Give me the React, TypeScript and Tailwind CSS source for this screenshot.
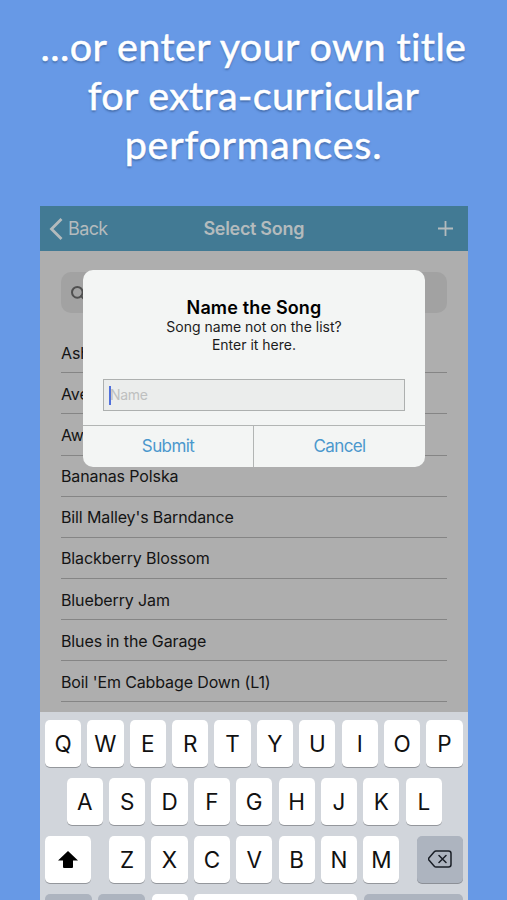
import clsx from "clsx";
import { Search } from "lucide-react";

const songs = [
  "Ashokan",
  "Avery",
  "Away",
  "Bananas Polska",
  "Bill Malley's Barndance",
  "Blackberry Blossom",
  "Blueberry Jam",
  "Blues in the Garage",
  "Boil 'Em Cabbage Down (L1)",
];

const Headline = () => (
  <h1 className="flex h-[206px] shrink-0 flex-col items-center pt-[22px] font-[Lato,sans-serif] text-[39.5px] leading-[48.8px] whitespace-nowrap text-white [text-shadow:0_1.5px_2px_rgb(40_70_120/0.5)] [-webkit-text-stroke:0.5px_white]">
    <span className="tracking-[0.4px]">...or enter your own title</span>
    <span className="tracking-[0.3px]">for extra-curricular</span>
    <span className="tracking-[0.8px]">performances.</span>
  </h1>
);

const NavBar = () => (
  <header className="grid h-[45px] shrink-0 grid-cols-3 items-center bg-[#427a94] text-[#b4bbbd]">
    <div className="flex items-center pl-[9px] text-[18px]">
      <svg width="14" height="22" viewBox="0 0 14 22" fill="none" stroke="currentColor" strokeWidth="2.8">
        <path d="M12.500 1 2.500 11l10 10" />
      </svg>
      <span className="ml-[5px] tracking-[-0.6px]">Back</span>
    </div>
    <div className="text-center text-[18px] font-semibold tracking-[-0.3px] whitespace-nowrap">Select Song</div>
    <svg className="mr-[15px] justify-self-end" width="15" height="15" viewBox="0 0 15 15" stroke="currentColor" strokeWidth="1.8">
      <path d="M7.5 0v15M0 7.5h15" />
    </svg>
  </header>
);

const SongList = () => (
  <main className="flex h-[461px] shrink-0 flex-col overflow-hidden bg-[#aeaeae] px-[21px] pt-[21px]">
    <div className="flex h-[41px] shrink-0 items-center rounded-[10px] bg-[#a2a2a2] pl-[8.5px]">
      <Search className="h-[16px] w-[16px] text-[#505050]" strokeWidth={3} />
    </div>
    <ul className="mt-[19.2px] text-[16px] tracking-[-0.12px] text-[#141414]">
      {songs.map((song) => (
        <li key={song} className="flex h-[41.15px] items-center border-b border-[#858585] pt-[1px]">
          {song}
        </li>
      ))}
    </ul>
  </main>
);

const NameDialog = () => (
  <div className="absolute top-[64px] left-[43px] flex h-[197px] w-[342px] flex-col overflow-hidden rounded-[10px] bg-[#f3f5f4]">
    <div className="flex h-[155px] shrink-0 flex-col items-center pt-[26px]">
      <h2 className="text-[18px] leading-[23px] font-semibold tracking-[0.15px] text-black">Name the Song</h2>
      <p className="-mt-px text-center text-[14px] leading-[17.5px] text-[#1c1c1c]">
        Song name not on the list?
        <br />
        Enter it here.
      </p>
      <div className="mt-[26px] flex h-[32px] w-[302px] items-center border border-[#adb0af] bg-[#ebedec] pl-[5px]">
        <span className="h-[19px] w-[2px] bg-[#5070dc]" />
        <span className="-ml-px pb-[2px] text-[14px] tracking-[-0.3px] text-[#bec0c0]">Name</span>
      </div>
    </div>
    <div className="grid flex-1 grid-cols-2 border-t border-[#b2b5b4] text-[17px] tracking-[-0.6px] text-[#4b98cd]">
      <div className="flex items-center justify-center border-r border-[#b2b5b4]">Submit</div>
      <div className="flex items-center justify-center">Cancel</div>
    </div>
  </div>
);

const Key = ({ label }: { label: string }) => (
  <div className="flex h-[46.5px] w-[36.2px] items-center justify-center rounded-[5px] bg-white pt-[1px] text-[22.5px] text-[#111] shadow-[0_1px_0_#94979c]">
    {label}
  </div>
);

const KeyRow = ({ letters, className }: { letters: string; className?: string }) => (
  <div className={clsx("flex gap-[6.2px]", className)}>
    {letters.split("").map((letter) => (
      <Key key={letter} label={letter} />
    ))}
  </div>
);

const Keyboard = () => (
  <div className="flex flex-1 flex-col gap-[11.5px] overflow-hidden bg-[#d1d5db] pt-[8px]">
    <KeyRow letters="QWERTYUIOP" className="justify-center" />
    <KeyRow letters="ASDFGHJKL" className="justify-center pl-[1px]" />
    <div className="flex justify-between px-[4.5px]">
      <div className="flex h-[46.5px] w-[46.5px] items-center justify-center rounded-[5px] bg-white shadow-[0_1px_0_#94979c]">
        <svg className="ml-[1px]" width="20" height="17" viewBox="0 0 20 17">
          <path d="M10 0 20 9.5h-5V16q0 1-1 1H6q-1 0-1-1V9.5H0Z" />
        </svg>
      </div>
      <KeyRow letters="ZXCVBNM" className="pl-[1px]" />
      <div className="flex h-[46.5px] w-[46.5px] items-center justify-center rounded-[5px] bg-[#adb4bf] shadow-[0_1px_0_#8c9097]">
        <svg width="24" height="18" viewBox="0 0 24 18" fill="none" stroke="#1a1f27" strokeWidth="1.5" strokeLinecap="round" strokeLinejoin="round">
          <path d="M8 1h12.5Q23 1 23 3.5v11q0 2.5-2.5 2.5H8Q7 17 6.3 16.2L.9 10Q.2 9 .9 8L6.3 1.8Q7 1 8 1ZM11 5.500l7 7M18 5.500l-7 7" />
        </svg>
      </div>
    </div>
    <div className="flex gap-[6.5px] px-[4.5px]">
      <div className="h-[46px] w-[47px] shrink-0 rounded-[5px] bg-[#adb4bf]" />
      <div className="h-[46px] w-[47px] shrink-0 rounded-[5px] bg-[#adb4bf]" />
      <div className="h-[46px] w-[36px] shrink-0 rounded-[5px] bg-white" />
      <div className="h-[46px] w-[163px] shrink-0 rounded-[5px] bg-white" />
      <div className="h-[46px] flex-1 rounded-[5px] bg-[#adb4bf]" />
    </div>
  </div>
);

export default function App() {
  return (
    <div className="flex h-[900px] w-[507px] flex-col overflow-hidden bg-[#6799e6]">
      <Headline />
      <div className="relative ml-[40px] flex min-h-0 w-[427.5px] flex-1 flex-col font-[Inter,sans-serif]">
        <NavBar />
        <SongList />
        <Keyboard />
        <NameDialog />
      </div>
    </div>
  );
}
